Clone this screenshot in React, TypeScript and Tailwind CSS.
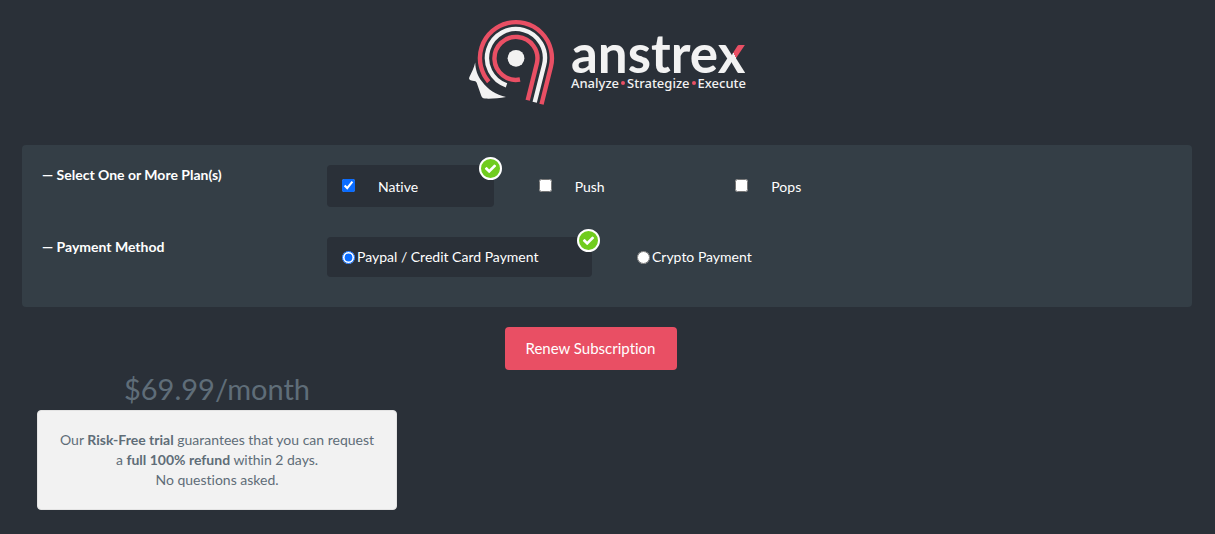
import { useState } from "react";

const PLANS = ["Native", "Push", "Pops"];
const METHODS = ["Paypal / Credit Card Payment", "Crypto Payment"];

function Logo() {
  return (
    <div className="flex items-start justify-center">
      <svg viewBox="8 9 88 87" className="h-[87px] w-[88px]" fill="none" aria-hidden="true">
        <g strokeWidth="4.4">
          <path d="M28.7 71.7A36 36 0 1 1 90.9 56.7L81.5 94.2" stroke="#e94f64" />
          <path d="M46.5 75.4A29 29 0 1 1 84.1 55L74.7 92.2" stroke="#f2f2f2" />
          <path d="M60 69.5A21.5 21.5 0 1 1 76.9 53.2L67.7 90.2" stroke="#e94f64" />
        </g>
        <circle cx="56" cy="48.3" r="8.4" fill="#f2f2f2" />
        <path
          d="M15.2 52.5C15.5 60 17.5 66 22 71.500C28 79.500 36 85 46 87C39 88.400 32 88.800 25 88.600C22.500 88.500 21.600 87 20.800 84.500L16.800 73C16.200 71 15 71.200 12.500 70.700C9.500 70.200 8.500 69 9.300 67.200C11.500 62.500 14 58 15.200 52.500Z"
          fill="#f2f2f2"
        />
      </svg>
      <div className="ml-[15px] flex flex-col text-[#f2f2f2]">
        <span className="mt-[10px] text-[53px] leading-[48px] font-bold">
          anstre
          <span className="bg-[linear-gradient(57deg,#f2f2f2_52%,#e94f64_52%)] bg-clip-text text-transparent">x</span>
        </span>
        <span className="-mt-[2px] flex items-center gap-[2px] font-['Noto_Sans',sans-serif] text-[13px] leading-[16px] font-medium">
          <span>Analyze</span>
          <span className="size-1 rounded-full bg-[#e94f64]" />
          <span>Strategize</span>
          <span className="size-1 rounded-full bg-[#e94f64]" />
          <span>Execute</span>
        </span>
      </div>
    </div>
  );
}

function SelectedBadge() {
  return (
    <span className="absolute -top-2 -right-2 flex size-[23px] items-center justify-center rounded-full border-2 border-white bg-[#70cc1e] text-white">
      <svg viewBox="0 0 1792 1792" className="size-[13px]" fill="currentColor" aria-hidden="true">
        <path d="M1671 566q0 40-28 68l-724 724-136 136q-28 28-68 28t-68-28l-136-136-362-362q-28-28-28-68t28-68l136-136q28-28 68-28t68 28l294 295 656-657q28-28 68-28t68 28l136 136q28 28 28 68z" />
      </svg>
    </span>
  );
}

export default function App() {
  const [plans, setPlans] = useState<string[]>(["Native"]);
  const [method, setMethod] = useState(METHODS[0]);

  const togglePlan = (plan: string) =>
    setPlans((current) => (current.includes(plan) ? current.filter((p) => p !== plan) : [...current, plan]));

  return (
    <main className="min-h-screen bg-[#2a3038] pt-[19px] pr-[23px] pb-6 pl-[22px] font-[Lato,sans-serif] text-sm leading-5 text-white [font-variant-ligatures:none]">
      <Logo />

      <form className="mt-[39px]" onSubmit={(event) => event.preventDefault()}>
        <div className="flex flex-col gap-[30px] rounded bg-[#343e46] px-5 pt-5 pb-[30px]">
          <fieldset className="flex">
            <legend className="float-left w-[285px] shrink-0 font-bold">— Select One or More Plan(s)</legend>
            <div className="grid w-[560px] grid-cols-3 gap-[30px]">
              {PLANS.map((plan) => {
                const selected = plans.includes(plan);
                return (
                  <label
                    key={plan}
                    className={
                      selected
                        ? "relative flex h-[42px] items-center rounded bg-[#2a3038] px-[15px]"
                        : "relative flex h-[42px] items-center rounded px-[15px]"
                    }
                  >
                    <input
                      type="checkbox"
                      checked={selected}
                      onChange={() => togglePlan(plan)}
                      className="mr-[23px] mb-[2px] size-[13px] accent-[#0a6cff]"
                    />
                    <span className="pt-[2px]">{plan}</span>
                    {selected && <SelectedBadge />}
                  </label>
                );
              })}
            </div>
          </fieldset>

          <fieldset className="flex">
            <legend className="float-left w-[285px] shrink-0 font-bold">— Payment Method</legend>
            <div className="grid w-[560px] grid-cols-2 gap-[30px]">
              {METHODS.map((name) => {
                const selected = method === name;
                return (
                  <label
                    key={name}
                    className={
                      selected
                        ? "relative flex h-10 items-center rounded bg-[#2a3038] px-[15px]"
                        : "relative flex h-10 items-center rounded px-[15px]"
                    }
                  >
                    <input
                      type="radio"
                      name="payment"
                      checked={selected}
                      onChange={() => setMethod(name)}
                      className="mr-[2px] size-[13px] accent-[#0a6cff]"
                    />
                    {name}
                    {selected && <SelectedBadge />}
                  </label>
                );
              })}
            </div>
          </fieldset>
        </div>

        <div className="mt-5 flex justify-center pr-[33px]">
          <button type="submit" className="rounded bg-[#e94f64] px-[21px] pt-[11px] pb-3 text-[15px] leading-5">
            Renew Subscription
          </button>
        </div>
      </form>

      <section className="ml-[15px] w-[360px] text-center text-[#5f6d78]">
        <h2 className="pb-[2px] text-[29px] leading-[38px]">$69.99/month</h2>
        <div className="rounded border border-[#e3e3e3] bg-[#f2f2f2] px-[19px] py-[19px]">
          <p>
            Our <strong>Risk-Free trial</strong> guarantees that you can request
          </p>
          <p>
            a <strong>full 100% refund</strong> within 2 days.
          </p>
          <p>No questions asked.</p>
        </div>
      </section>
    </main>
  );
}
